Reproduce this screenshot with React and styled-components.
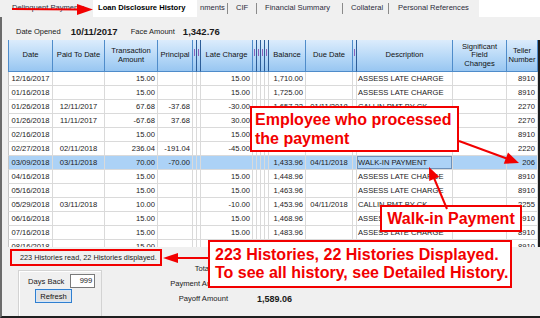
import React from 'react';
import styled, { createGlobalStyle } from 'styled-components';

const GlobalStyle = createGlobalStyle`
  html, body {
    margin: 0;
    padding: 0;
    background: #f0f0f0;
  }
  body {
    font-family: "Liberation Sans", Arial, sans-serif;
  }
`;

const RED = '#f20000';

const Screen = styled.div`
  position: relative;
  width: 540px;
  height: 318px;
  overflow: hidden;
  background: #f0f0f0;
  color: #1a1a1a;
  font-size: 7.6px;
`;

const TabStrip = styled.div`
  display: flex;
  height: 17px;
  background: #fff;
`;

const Tab = styled.div`
  position: relative;
  flex: none;
  box-sizing: border-box;
  width: ${p => p.$w}px;
  padding: 0 0 3px ${p => p.$pad}px;
  display: flex;
  align-items: center;
  white-space: nowrap;
  overflow: hidden;
  background: ${p => (p.$active ? '#fff' : '#f0f0f0')};
  font-weight: ${p => (p.$active ? 700 : 400)};
  color: ${p => (p.$active ? '#000' : '#2b2b3a')};
  &::after {
    content: '';
    display: ${p => (p.$sep ? 'block' : 'none')};
    position: absolute;
    right: 0;
    top: 3px;
    bottom: 3px;
    width: 1px;
    background: #8a8a8a;
  }
`;

const Panel = styled.div`
  box-sizing: border-box;
  height: 301px;
  border-left: 2px solid #6b6b6b;
  border-bottom: 2px solid #1f1f1f;
  overflow: hidden;
`;

const InfoRow = styled.div`
  box-sizing: border-box;
  height: 23px;
  padding: 6px 0 0 14px;
  display: flex;
  align-items: center;
`;

const InfoLabel = styled.span`
  font-size: 7.5px;
  margin-right: ${p => p.$mr}px;
`;

const InfoValue = styled.span`
  font-size: 9.5px;
  font-weight: 700;
  margin-right: ${p => p.$mr}px;
`;

const columns = [
  { k: 'date', w: 45, a: 'center', h: 'Date' },
  { k: 'paid', w: 52, a: 'center', h: 'Paid To Date' },
  { k: 'amt', w: 53, a: 'right', h: 'Transaction\nAmount' },
  { k: 'prin', w: 35, a: 'right', h: 'Principal' },
  { n: true, w: 4 },
  { n: true, w: 4 },
  { k: 'late', w: 52, a: 'right', h: 'Late Charge' },
  { n: true, w: 4 },
  { n: true, w: 4 },
  { n: true, w: 4 },
  { n: true, w: 4 },
  { k: 'bal', w: 37, a: 'right', h: 'Balance' },
  { k: 'due', w: 47, a: 'center', h: 'Due Date' },
  { n: true, w: 4 },
  { k: 'desc', w: 96, a: 'left', h: 'Description' },
  { k: 'sig', w: 54, a: 'center', h: 'Significant\nField\nChanges' },
  { k: 'teller', w: 31, a: 'right', h: 'Teller\nNumber' },
];

const template = columns.map(c => `${c.w}px`).join(' ');

const rows = [
  { date: '12/16/2017', amt: '15.00', late: '15.00', bal: '1,710.00', desc: 'ASSESS LATE CHARGE', teller: '8910' },
  { date: '01/16/2018', amt: '15.00', late: '15.00', bal: '1,725.00', desc: 'ASSESS LATE CHARGE', teller: '8910' },
  { date: '01/26/2018', paid: '12/11/2017', amt: '67.68', prin: '-37.68', late: '-30.00', bal: '1,657.32', due: '01/11/2018', desc: 'CALLIN PMT BY CK', teller: '2270' },
  { date: '01/26/2018', paid: '11/11/2017', amt: '-67.68', prin: '37.68', late: '30.00', bal: '1,725.00', due: '12/11/2017', desc: 'REVERSE CALLIN PMT', teller: '2270' },
  { date: '02/16/2018', amt: '15.00', late: '15.00', bal: '1,740.00', desc: 'ASSESS LATE CHARGE', teller: '8910' },
  { date: '02/27/2018', paid: '02/11/2018', amt: '236.04', prin: '-191.04', late: '-45.00', bal: '1,503.96', due: '03/11/2018', desc: 'CALLIN PMT BY CK', teller: '2220' },
  { date: '03/09/2018', paid: '03/11/2018', amt: '70.00', prin: '-70.00', bal: '1,433.96', due: '04/11/2018', desc: 'WALK-IN PAYMENT', teller: '206', sel: true },
  { date: '04/16/2018', amt: '15.00', late: '15.00', bal: '1,448.96', desc: 'ASSESS LATE CHARGE', teller: '8910' },
  { date: '05/16/2018', amt: '15.00', late: '15.00', bal: '1,463.96', desc: 'ASSESS LATE CHARGE', teller: '8910' },
  { date: '05/29/2018', paid: '03/11/2018', amt: '10.00', late: '-10.00', bal: '1,453.96', due: '04/11/2018', desc: 'CALLIN PMT BY CK', teller: '2255' },
  { date: '06/16/2018', amt: '15.00', late: '15.00', bal: '1,468.96', desc: 'ASSESS LATE CHARGE', teller: '8910' },
  { date: '07/16/2018', amt: '15.00', late: '15.00', bal: '1,483.96', desc: 'ASSESS LATE CHARGE', teller: '8910' },
  { date: '08/16/2018', amt: '15.00', late: '15.00', bal: '1,498.96', desc: 'ASSESS LATE CHARGE', teller: '8910' },
];

const Grid = styled.div`
  box-sizing: border-box;
  margin-left: 6px;
  width: 532px;
  height: 207px;
  border-right: 2px solid #1c1c1c;
  background: #fff;
  overflow: hidden;
`;

const GridRow = styled.div`
  display: grid;
  grid-template-columns: ${template};
  height: ${p => (p.$head ? 32 : 14)}px;
`;

const HeadCell = styled.div`
  box-sizing: border-box;
  display: flex;
  align-items: center;
  justify-content: center;
  text-align: center;
  white-space: pre-line;
  line-height: 8.5px;
  overflow: hidden;
  color: #111;
  background: linear-gradient(#dcecfc, #b6d8f7 55%, #98c6f1);
  border-right: 1px solid ${p => (p.$narrow ? '#2c5d98' : '#4f8cca')};
  border-bottom: 1px solid #4f8cca;
  &:first-child {
    border-left: 1px solid #4f8cca;
  }
`;

const NarrowMark = styled.i`
  display: block;
  width: 1px;
  height: 7px;
  margin-bottom: 6px;
  background: #8a62b8;
`;

const Cell = styled.div`
  box-sizing: border-box;
  padding: 0 ${p => (p.$align === 'left' ? 1 : 2)}px;
  text-align: ${p => p.$align};
  line-height: 13px;
  white-space: nowrap;
  overflow: hidden;
  background: ${p => (p.$sel ? '#acd2f6' : '#fff')};
  border-right: 1px solid #dadada;
  border-bottom: 1px solid #dadada;
  box-shadow: ${p => (p.$focus ? 'inset 0 0 0 1px #6d91ba' : 'none')};
  &:first-child {
    border-left: 1px solid #c4c4c4;
  }
`;

const Bottom = styled.div`
  display: flex;
  align-items: flex-start;
`;

const LeftCol = styled.div`
  flex: none;
  width: 166px;
  display: flex;
  flex-direction: column;
  align-items: flex-start;
`;

const Status = styled.div`
  box-sizing: border-box;
  margin: 2px 0 0 8px;
  height: 17px;
  padding: 0 0 0 8px;
  width: 152px;
  display: flex;
  align-items: center;
  border: 2px solid ${RED};
  font-size: 7.3px;
`;

const GroupBox = styled.div`
  box-sizing: border-box;
  margin: 4px 0 0 16px;
  width: 84px;
  height: 52px;
  padding: 3px 0 0 9px;
  border: 1px solid #d3d3d3;
  box-shadow: inset 1px 1px 0 #fff;
`;

const FieldRow = styled.div`
  display: flex;
  align-items: center;
  gap: 6px;
`;

const NumBox = styled.div`
  box-sizing: border-box;
  width: 25px;
  height: 14px;
  padding-right: 2px;
  background: #fff;
  border: 1px solid #7a7a7a;
  text-align: right;
  line-height: 12px;
`;

const Button = styled.button`
  box-sizing: border-box;
  margin: 1px 0 0 7px;
  width: 37px;
  height: 14px;
  padding: 0;
  font: inherit;
  color: #111;
  background: #e1e1e1;
  border: 1px solid #2f7fd0;
  box-shadow: inset 0 0 0 1px #d6e6f7;
`;

const Totals = styled.div`
  margin-top: 14px;
  display: grid;
  grid-template-columns: 60px 64px 85px 83px;
  grid-auto-rows: 15px;
  align-items: center;
`;

const TotLabel = styled.span`
  text-align: ${p => p.$align || 'right'};
  padding-left: ${p => p.$pl || 0}px;
  white-space: nowrap;
`;

const TotValue = styled.span`
  text-align: right;
  font-weight: ${p => (p.$bold ? 700 : 400)};
  font-size: ${p => (p.$bold ? 9 : 7.6)}px;
  white-space: nowrap;
`;

const Callout = styled.div`
  position: absolute;
  left: ${p => p.$x}px;
  top: ${p => p.$y}px;
  width: ${p => p.$w}px;
  height: ${p => p.$h}px;
  box-sizing: border-box;
  padding-left: ${p => p.$pl}px;
  display: flex;
  flex-direction: column;
  justify-content: center;
  align-items: ${p => (p.$center ? 'center' : 'flex-start')};
  background: #fff;
  border: 2px solid ${RED};
  color: ${RED};
  font-weight: 700;
  font-size: ${p => p.$fs || 16}px;
  line-height: ${p => p.$lh || 19}px;
  white-space: nowrap;
`;

const Arrows = styled.svg`
  position: absolute;
  left: 0;
  top: 0;
  pointer-events: none;
`;

const tabs = [
  { label: 'Delinquent Payments', w: 93, pad: 12 },
  { label: 'Loan Disclosure History', w: 104, pad: 5, active: true },
  { label: 'nments', w: 31, pad: 3, sep: true },
  { label: 'CIF', w: 29, pad: 8, sep: true },
  { label: 'Financial Summary', w: 86, pad: 8, sep: true },
  { label: 'Collateral', w: 46, pad: 8, sep: true },
  { label: 'Personal References', w: 90, pad: 9 },
];

export default function App() {
  return (
    <Screen>
      <GlobalStyle />
      <TabStrip>
        {tabs.map(t => (
          <Tab key={t.label} $w={t.w} $pad={t.pad} $active={t.active} $sep={t.sep}>
            {t.label}
          </Tab>
        ))}
      </TabStrip>
      <Panel>
        <InfoRow>
          <InfoLabel $mr={10}>Date Opened</InfoLabel>
          <InfoValue $mr={13}>10/11/2017</InfoValue>
          <InfoLabel $mr={8}>Face Amount</InfoLabel>
          <InfoValue $mr={0}>1,342.76</InfoValue>
        </InfoRow>
        <Grid>
          <GridRow $head>
            {columns.map((c, i) => (
              <HeadCell key={i} $narrow={c.n}>
                {c.n ? <NarrowMark /> : c.h}
              </HeadCell>
            ))}
          </GridRow>
          {rows.map((r, ri) => (
            <GridRow key={ri}>
              {columns.map((c, i) => (
                <Cell
                  key={i}
                  $align={c.a || 'left'}
                  $sel={r.sel}
                  $focus={r.sel && c.k === 'desc'}
                >
                  {c.n ? '' : r[c.k] || ''}
                </Cell>
              ))}
            </GridRow>
          ))}
        </Grid>
        <Bottom>
          <LeftCol>
            <Status>223 Histories read, 22 Histories displayed.</Status>
            <GroupBox>
              <FieldRow>
                <span>Days Back</span>
                <NumBox>999</NumBox>
              </FieldRow>
              <Button type="button">Refresh</Button>
            </GroupBox>
          </LeftCol>
          <Totals>
            <TotLabel>Total Paid</TotLabel>
            <TotValue>152.68</TotValue>
            <span />
            <span />
            <TotLabel>Payment Amount</TotLabel>
            <TotValue>70.00</TotValue>
            <TotLabel $align="left" $pl={8}>Last Payment Amount</TotLabel>
            <TotValue>70.00</TotValue>
            <TotLabel>Payoff Amount</TotLabel>
            <TotValue $bold>1,589.06</TotValue>
          </Totals>
        </Bottom>
      </Panel>

      <Callout $x={250} $y={106} $w={209} $h={46} $pl={3}>
        <span>Employee who processed</span>
        <span>the payment</span>
      </Callout>
      <Callout $x={380} $y={205} $w={142} $h={27} $pl={0} $center>
        <span>Walk-in Payment</span>
      </Callout>
      <Callout $x={208} $y={240} $w={304} $h={48} $pl={5} $lh={18}>
        <span>223 Histories, 22 Histories Displayed.</span>
        <span>To see all history, see Detailed History.</span>
      </Callout>

      <Arrows width="540" height="318" viewBox="0 0 540 318">
        <g stroke={RED} strokeWidth="2" fill="none">
          <line x1="12" y1="9" x2="80" y2="9.5" />
          <line x1="459" y1="141" x2="508" y2="159" />
          <line x1="447" y1="209" x2="434" y2="178" />
          <line x1="176" y1="258" x2="208" y2="258" />
        </g>
        <g fill={RED}>
          <polygon points="77,4 93,9.5 77,15" />
          <polygon points="519,163 508,152.5 503.8,163.7" />
          <polygon points="429,167 439.2,176.7 429.2,181.1" />
          <polygon points="163,258 178,253 178,263" />
        </g>
      </Arrows>
    </Screen>
  );
}
